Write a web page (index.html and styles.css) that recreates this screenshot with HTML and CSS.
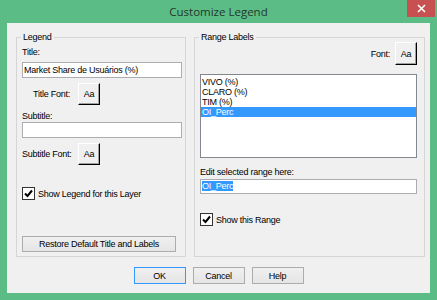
FILE: index.html
```html
<!DOCTYPE html>
<html lang="en">
  <head>
    <meta charset="UTF-8" />
    <title>Customize Legend</title>
    <link rel="stylesheet" href="styles.css">
  </head>
  <body>
    <div class="window">
      <div class="titlebar">
        <span class="title">Customize Legend</span>
        <span class="close">
          <svg width="9" height="9" viewBox="0 0 9 9">
            <path d="M1 1 L8 8 M8 1 L1 8" stroke="#fff" stroke-width="1.6" />
          </svg>
        </span>
      </div>
      <div class="client">
        <div class="groups">
          <!-- left box: legend title settings -->
          <fieldset class="group group-legend">
            <legend>Legend</legend>
            <div class="lbl">Title:</div>
            <div class="field">Market Share de Usuários (%)</div>
            <div class="font-row">
              <span class="font-lbl">Title Font:</span>
              <span class="aa">Aa</span>
            </div>
            <div class="lbl sub">Subtitle:</div>
            <div class="field"></div>
            <div class="font-row">
              <span class="font-lbl">Subtitle Font:</span>
              <span class="aa">Aa</span>
            </div>
            <div class="check-row legend-check">
              <span class="cb">
                <svg width="11" height="11" viewBox="0 0 11 11">
                  <path d="M2 5.5 L4.5 8 L9 2.5" fill="none" stroke="#000" stroke-width="2" />
                </svg>
              </span>
              <span>Show Legend for this Layer</span>
            </div>
            <div class="btn restore">Restore Default Title and Labels</div>
          </fieldset>

          <!-- right box: range labels -->
          <fieldset class="group group-range">
            <legend>Range Labels</legend>
            <div class="range-font">
              <span>Font:</span>
              <span class="aa">Aa</span>
            </div>
            <div class="listbox">
              <div class="item">VIVO (%)</div>
              <div class="item">CLARO (%)</div>
              <div class="item">TIM (%)</div>
              <div class="item selected">OI_Perc</div>
            </div>
            <div class="lbl edit-lbl">Edit selected range here:</div>
            <div class="field edit-field"><span class="hl">OI_Perc</span></div>
            <div class="check-row range-check">
              <span class="cb">
                <svg width="11" height="11" viewBox="0 0 11 11">
                  <path d="M2 5.5 L4.5 8 L9 2.5" fill="none" stroke="#000" stroke-width="2" />
                </svg>
              </span>
              <span>Show this Range</span>
            </div>
          </fieldset>
        </div>
        <div class="actions">
          <div class="btn default">OK</div>
          <div class="btn">Cancel</div>
          <div class="btn">Help</div>
        </div>
      </div>
    </div>
  </body>
</html>
```

FILE: styles.css
```css
body {
  margin: 0;
  font-family: "Liberation Sans", Arial, sans-serif;
  font-size: 9px;
  letter-spacing: -0.25px;
  color: #000;
}
.window {
  width: 437px;
  height: 300px;
  box-sizing: border-box;
  background: #5bbd85;
  padding: 0 7px 7px;
  display: flex;
  flex-direction: column;
}
.titlebar {
  height: 23px;
  margin: 0 -7px;
  position: relative;
  display: flex;
  justify-content: center;
  align-items: center;
  font-family: "Open Sans", "Liberation Sans", sans-serif;
  font-size: 11.5px;
  letter-spacing: 0;
  color: #24372b;
}
.close {
  position: absolute;
  top: 0;
  right: 2px;
  width: 28px;
  height: 17px;
  background: #c75050;
  display: flex;
  align-items: center;
  justify-content: center;
}
.client {
  flex: 1;
  background: #f0f0f0;
  display: flex;
  flex-direction: column;
  padding: 8px 5px 0 9px;
}
.groups {
  display: flex;
  gap: 8px;
  height: 226px;
}
.group {
  margin: 0;
  border: 1px solid #d5d5d5;
  box-sizing: border-box;
  min-width: 0;
  padding: 3px 3px 4px 5px;
  display: flex;
  flex-direction: column;
}
.group legend {
  padding: 0 2px;
  margin-left: -1px;
  line-height: 12px;
}
.group-legend {
  width: 170px;
}
.group-range {
  width: 231px;
  padding-right: 7px;
}
.lbl {
  line-height: 12px;
}
.lbl.sub {
  margin-top: 5px;
}
.field {
  height: 16px;
  box-sizing: border-box;
  border: 1px solid #abadb3;
  background: #fff;
  line-height: 14px;
  padding: 0 1px;
  margin-top: 4px;
  white-space: nowrap;
}
.lbl.sub + .field {
  margin-top: 0;
}
.font-row {
  display: flex;
  align-items: center;
  gap: 8px;
  margin-top: 5px;
}
.font-lbl {
  width: 48px;
  text-align: right;
  white-space: nowrap;
}
.aa {
  width: 22px;
  height: 23px;
  box-sizing: border-box;
  border: 1px solid;
  border-color: #fff #000 #000 #fff;
  box-shadow: inset -1px -1px #a0a0a0;
  background: #f0f0f0;
  display: flex;
  align-items: center;
  justify-content: center;
}
.font-row .aa {
  height: 22px;
}
.check-row {
  display: flex;
  align-items: center;
  gap: 3px;
  line-height: 12px;
}
.legend-check {
  margin-top: 22px;
}
.cb {
  width: 13px;
  height: 13px;
  box-sizing: border-box;
  border: 1px solid #333;
  background: #fff;
  display: flex;
}
.btn {
  height: 17px;
  box-sizing: border-box;
  border: 1px solid #acacac;
  background: linear-gradient(#f0f0f0, #e5e5e5);
  display: flex;
  align-items: center;
  justify-content: center;
}
.btn.default {
  border-color: #3399ff;
}
.restore {
  width: 154px;
  height: 16px;
  margin-top: auto;
}
.range-font {
  display: flex;
  justify-content: flex-end;
  align-items: center;
  gap: 5px;
  margin-top: -4px;
}
.listbox {
  height: 84px;
  box-sizing: border-box;
  border: 1px solid #828790;
  background: #fff;
  padding-top: 2px;
  margin-top: 9px;
}
.item {
  line-height: 10px;
  padding-left: 1px;
}
.item.selected {
  background: #3399ff;
  color: #fff;
}
.edit-lbl {
  margin-top: 8px;
}
.edit-field {
  height: 15px;
  line-height: 13px;
  margin-top: 1px;
}
.hl {
  background: #3399ff;
  color: #fff;
}
.range-check {
  margin-top: 19px;
}
.actions {
  display: flex;
  justify-content: center;
  gap: 7px;
  margin: 10px -5px 0 -9px;
}
.actions .btn {
  width: 52px;
}
```
